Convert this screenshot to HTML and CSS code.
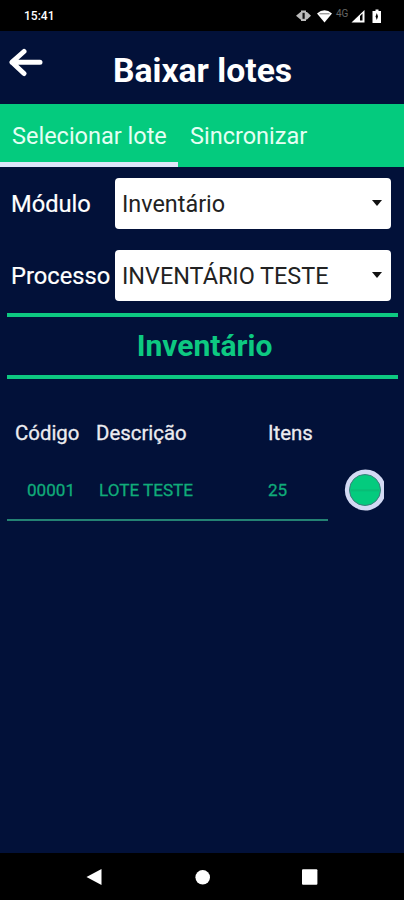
FILE: index.html
```html
<!DOCTYPE html>
<html lang="pt-BR">
<head>
    <meta charset="UTF-8">
    <meta name="viewport" content="width=device-width, initial-scale=1.0">
    <title>Baixar lotes</title>
    <link rel="stylesheet" href="styles.css">
</head>
<body>
    <div class="status-bar">
        <span class="time">15:41</span>
        <svg class="status-icons" width="90" height="20" viewBox="0 0 90 20">
            <!-- vibrate -->
            <path d="M0 9.800L4.500 6H5V4.500h5V6h1L15 9.800L11 13.600h-1V15h-5v-1.400h-.500z" fill="#bbb"/>
            <path d="M6.500 6.800h2.200v6H6.500z" fill="#111"/>
            <!-- wifi -->
            <path d="M21 7.500q7.500-6.500 15 0l-7.500 9z" fill="#fff"/>
            <path d="M23.500 7.800h10" fill="none" stroke="#777" stroke-width="1"/>
            <text class="network" x="40" y="11">4G</text>
            <!-- signal -->
            <path d="M55.500 16.500L68.500 4v12.500z" fill="#fff"/>
            <path d="M64 10l2.500-2.500v7H64z" fill="#000"/>
            <!-- battery -->
            <path d="M79.500 3.500h3V5h2.500v12h-8.500V5h3z" fill="#fff"/>
            <path d="M80.800 7l1.200 3.500-1.200 3.500-1.200-3.500z" fill="#000"/>
        </svg>
    </div>

    <div class="header">
        <svg class="back" width="36" height="30" viewBox="0 0 36 30">
            <path d="M17 4.500L5 15.200L17 26.500M5 15.200H33" fill="none" stroke="#fff" stroke-width="5" stroke-linecap="round" stroke-linejoin="round"/>
        </svg>
        <h1>Baixar lotes</h1>
    </div>

    <div class="tabs">
        <div class="tab active">Selecionar lote</div>
        <div class="tab">Sincronizar</div>
    </div>

    <div class="content">
        <div class="form-group">
            <span class="label">Módulo</span>
            <div class="select"><span class="value">Inventário</span><span class="caret"></span></div>
        </div>
        <div class="form-group">
            <span class="label">Processo</span>
            <div class="select"><span class="value">INVENTÁRIO TESTE</span><span class="caret"></span></div>
        </div>

        <h2>Inventário</h2>

        <div class="row head">
            <span>Código</span>
            <span>Descrição</span>
            <span>Itens</span>
        </div>
        <div class="lot">
            <div class="row item">
                <span>00001</span>
                <span>LOTE TESTE</span>
                <span>25</span>
            </div>
            <svg class="radio" width="42" height="44" viewBox="0 0 42 44">
                <path d="M40 13.500V30.500A20.500 20.500 0 1 1 40 13.500z" fill="#d3daf3"/>
                <circle cx="21" cy="22" r="15.500" fill="#04cb7e" stroke="#3d7f7c" stroke-width="1"/>
                <path d="M7 22.300h28" stroke="#08bd76" stroke-width="2"/>
            </svg>
        </div>
    </div>

    <div class="nav-bar">
        <svg width="16" height="18" viewBox="0 0 16 18"><path d="M0.500 9L15.500 1v16z" fill="#fff"/></svg>
        <svg width="16" height="18" viewBox="0 0 16 18"><circle cx="8.700" cy="9.300" r="7.300" fill="#fff"/></svg>
        <svg width="16" height="18" viewBox="0 0 16 18"><rect y="1.300" width="15.400" height="15.400" rx="1" fill="#fff"/></svg>
    </div>
</body>
</html>
```

FILE: styles.css
```css
* {
    box-sizing: border-box;
}
body {
    margin: 0;
    height: 900px;
    display: flex;
    flex-direction: column;
    background-color: #021139;
    color: #fff;
    font-family: Roboto, "Liberation Sans", sans-serif;
    white-space: nowrap;
    overflow: hidden;
}
.status-bar {
    height: 31px;
    flex: none;
    display: flex;
    align-items: center;
    justify-content: space-between;
    padding: 0 18px 0 24px;
    background-color: #000;
}
.time {
    font-size: 12px;
    font-weight: 500;
}
.network {
    font-size: 10px;
    fill: #666;
}
.header {
    height: 73px;
    flex: none;
    display: flex;
    padding-left: 7px;
}
.back {
    margin-top: 16px;
}
h1 {
    margin: 20px 0 0 70px;
    font-size: 33.7px;
    line-height: 40px;
    font-weight: 700;
}
.tabs {
    height: 63px;
    flex: none;
    display: flex;
    background-color: #04cb7e;
}
.tab {
    padding: 0 12px;
    font-size: 23.5px;
    line-height: 64px;
    color: #e4fff3;
}
.tab.active {
    width: 178px;
    border-bottom: 5px solid #dde5f8;
}
.content {
    flex: 1;
    padding: 11px 6px 0 7px;
}
.form-group {
    display: flex;
    align-items: center;
    height: 51px;
    margin-bottom: 21px;
}
.label {
    width: 108px;
    padding-left: 4px;
    font-size: 23.7px;
    -webkit-text-stroke: 0.2px #fff;
}
.select {
    width: 276px;
    height: 51px;
    display: flex;
    align-items: center;
    justify-content: space-between;
    padding: 0 9px 0 7px;
    border-radius: 4px;
    background-color: #fff;
    color: #222;
    font-size: 23.4px;
}
.caret {
    margin-top: -2px;
    border: 5.5px solid transparent;
    border-top: 6px solid #111;
    border-bottom: 0;
}
h2 {
    height: 66px;
    margin: -9px 0 0;
    padding-left: 4px;
    border-top: 4px solid #0dc981;
    border-bottom: 4px solid #0dc981;
    color: #0dc981;
    font-size: 30px;
    line-height: 57px;
    font-weight: 700;
    text-align: center;
}
.row {
    display: grid;
    align-items: center;
}
.head {
    grid-template-columns: 81px 172px auto;
    height: 30px;
    margin-top: 39px;
    padding-left: 8px;
    font-size: 20.4px;
    color: #ececf0;
    -webkit-text-stroke: 0.3px #ececf0;
}
.lot {
    display: flex;
    margin-top: 20px;
}
.item {
    grid-template-columns: 72px 169px auto;
    width: 321px;
    height: 53px;
    padding: 0 0 8px 20px;
    border-bottom: 2px solid #248273;
    color: #10ac79;
    font-size: 17.1px;
    -webkit-text-stroke: 0.3px #10ac79;
}
.radio {
    margin-left: 16px;
}
.nav-bar {
    height: 47px;
    flex: none;
    display: flex;
    align-items: center;
    justify-content: space-between;
    padding: 0 86px;
    background-color: #000;
}
```
